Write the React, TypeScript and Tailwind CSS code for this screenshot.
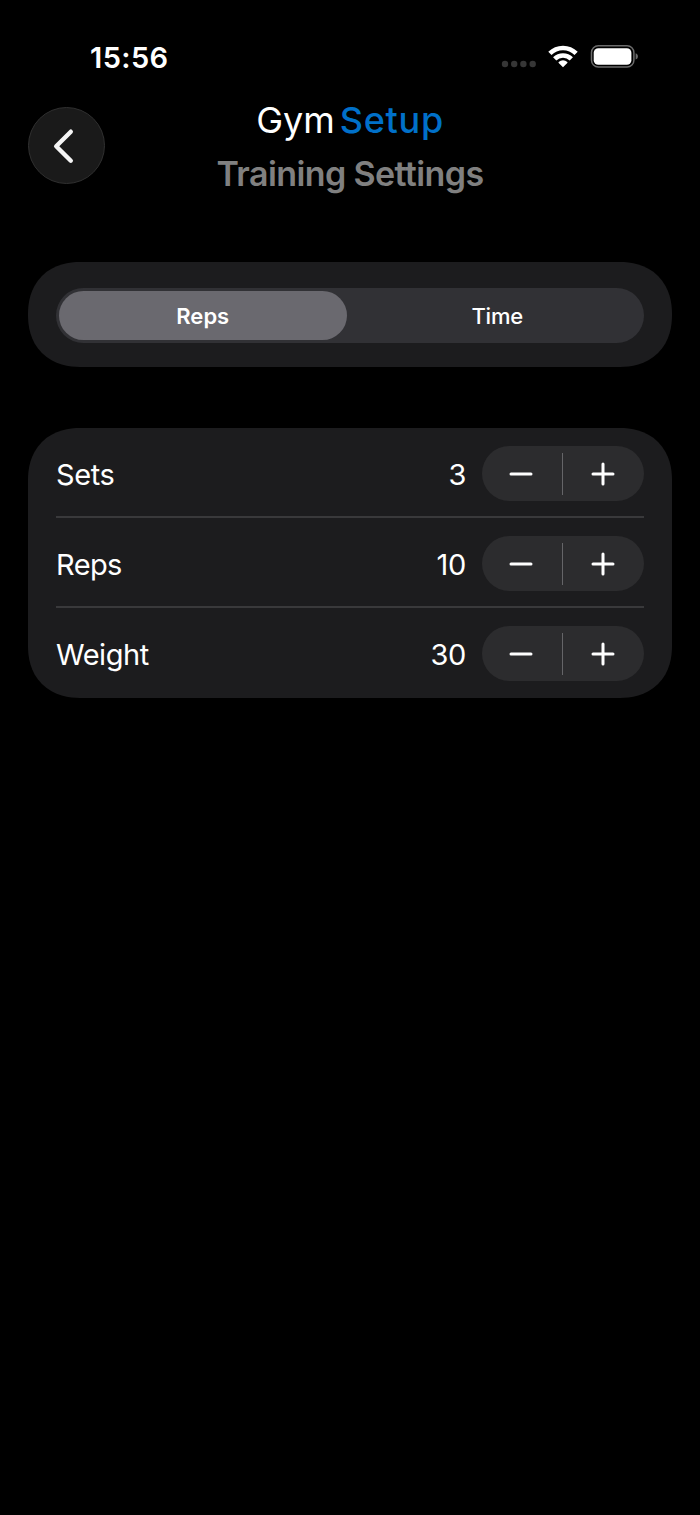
import { useState } from "react";

const MODES = ["Reps", "Time"];

const FIELDS = [
  { name: "Sets", initial: 3, labelClass: "tracking-[-0.4px]" },
  { name: "Reps", initial: 10, labelClass: "tracking-[-0.6px]" },
  { name: "Weight", initial: 30, labelClass: "tracking-[-0.45px]" },
];

const SignalDots = () => (
  <svg width="36" height="8" viewBox="0 0 36 8" fill="#363636" className="mt-[15px]">
    <circle cx="4" cy="4" r="3.2" />
    <circle cx="13.2" cy="4" r="3.2" />
    <circle cx="22.4" cy="4" r="3.2" />
    <circle cx="31.7" cy="4" r="3.2" />
  </svg>
);

const WifiIcon = () => (
  <svg width="30" height="23" viewBox="0 0 30 23" className="ml-[11px]">
    <g fill="none" stroke="#fff" strokeWidth="4.6">
      <path d="M1.9 8.4a18.6 18.6 0 0 1 26.2 0" />
      <path d="M6.7 13.9a11.7 11.7 0 0 1 16.6 0" />
    </g>
    <path
      d="M15 22.3 10.7 18c-.3-.3-.3-.8 0-1.100a6.6 6.6 0 0 1 8.6 0c.3.3.3.8 0 1.100Z"
      fill="#fff"
    />
  </svg>
);

const BatteryIcon = () => (
  <svg width="48" height="23" viewBox="0 0 48 23" className="ml-[12px]">
    <rect x="1.5" y="0.8" width="42.4" height="21.2" rx="6.8" fill="none" stroke="#6b6b6b" strokeWidth="1.5" />
    <rect x="3.7" y="3.2" width="37.700" height="16.6" rx="4.6" fill="#fff" />
    <path d="M45.6 8.300c1.500.5 2.300 1.700 2.300 3.100s-.8 2.600-2.300 3.100Z" fill="#6b6b6b" />
  </svg>
);

const StatusBar = () => (
  <div className="flex h-[107px] items-start justify-between pt-[45px] pr-[62px] pl-[90px]">
    <span className="text-[29px] leading-[25px] font-semibold tracking-[0.4px]">15:56</span>
    <div className="flex items-start">
      <SignalDots />
      <WifiIcon />
      <BatteryIcon />
    </div>
  </div>
);

const Header = () => (
  <header className="grid h-[155px] grid-cols-[77px_1fr_77px] items-start px-7">
    <button
      aria-label="Back"
      className="flex size-[77px] items-center justify-center rounded-full border-[1.5px] border-[#303030] bg-[#1a1a1a]"
    >
      <svg width="24" height="36" viewBox="0 0 24 36" fill="none" className="mr-[5px]">
        <path
          d="M18.8 3.7 4.2 18.2 18.8 32.7"
          stroke="#f5f5f5"
          strokeWidth="4.4"
          strokeLinecap="round"
          strokeLinejoin="round"
        />
      </svg>
    </button>
    <div className="flex flex-col items-center">
      <h1 className="flex gap-[5px] text-[36px] leading-[27px] whitespace-nowrap">
        <span>Gym</span>
        <span className="font-medium tracking-[0.7px] text-[#0070c9]">Setup</span>
      </h1>
      <h2 className="mt-[26px] text-[34px] leading-[28px] font-semibold tracking-[-0.6px] whitespace-nowrap text-[#808080]">
        Training Settings
      </h2>
    </div>
  </header>
);

const Stepper = ({ onChange }: { onChange: (delta: number) => void }) => (
  <div className="mr-[0.5px] flex h-[55px] w-[162px] items-center rounded-[28px] bg-[#2c2c2e]">
    <button aria-label="Decrease" className="flex flex-1 justify-center pr-px" onClick={() => onChange(-1)}>
      <svg width="24" height="24" viewBox="0 0 24 24" stroke="#fff" strokeWidth="3" strokeLinecap="round">
        <path d="M2 12h20" />
      </svg>
    </button>
    <div className="h-[42px] w-[1.5px] bg-[#656568]" />
    <button aria-label="Increase" className="flex flex-1 justify-center pr-px" onClick={() => onChange(1)}>
      <svg width="24" height="24" viewBox="0 0 24 24" stroke="#fff" strokeWidth="3" strokeLinecap="round">
        <path d="M2 12h20M12 2v20" />
      </svg>
    </button>
  </div>
);

export default function App() {
  const [mode, setMode] = useState("Reps");
  const [values, setValues] = useState(FIELDS.map((f) => f.initial));

  const change = (index: number, delta: number) =>
    setValues((prev) => prev.map((v, i) => (i === index ? Math.max(0, v + delta) : v)));

  return (
    <div className="min-h-[1515px] w-[700px] bg-black font-['Inter',sans-serif] text-white">
      <StatusBar />
      <Header />
      <main className="flex flex-col gap-[61px] px-7">
        <section className="rounded-[52px] bg-[#1c1c1e] px-7 pt-[26px] pb-6 [corner-shape:superellipse(1.15)]">
          <div className="flex h-[55px] gap-[7px] rounded-[28px] bg-[#313135] p-[3px]">
            {MODES.map((m) => (
              <button
                key={m}
                onClick={() => setMode(m)}
                className={`flex flex-1 items-center justify-center rounded-[25px] pt-px text-[22px] ${
                  m === mode ? "bg-[#6a696f] font-semibold" : "font-medium tracking-[-0.2px]"
                }`}
              >
                {m}
              </button>
            ))}
          </div>
        </section>
        <section className="rounded-[52px] bg-[#1c1c1e] px-7 [corner-shape:superellipse(1.15)]">
          {FIELDS.map((field, i) => (
            <div
              key={field.name}
              className="flex h-[90px] items-center justify-between border-b-[2px] border-[#39393b] pt-[3px] last:border-transparent"
            >
              <span className={`pt-[3px] text-[29px] ${field.labelClass}`}>{field.name}</span>
              <div className="flex items-center gap-[15.5px]">
                <span className="pt-[3px] text-[29px] tracking-[-0.3px]">{values[i]}</span>
                <Stepper onChange={(delta) => change(i, delta)} />
              </div>
            </div>
          ))}
        </section>
      </main>
    </div>
  );
}
